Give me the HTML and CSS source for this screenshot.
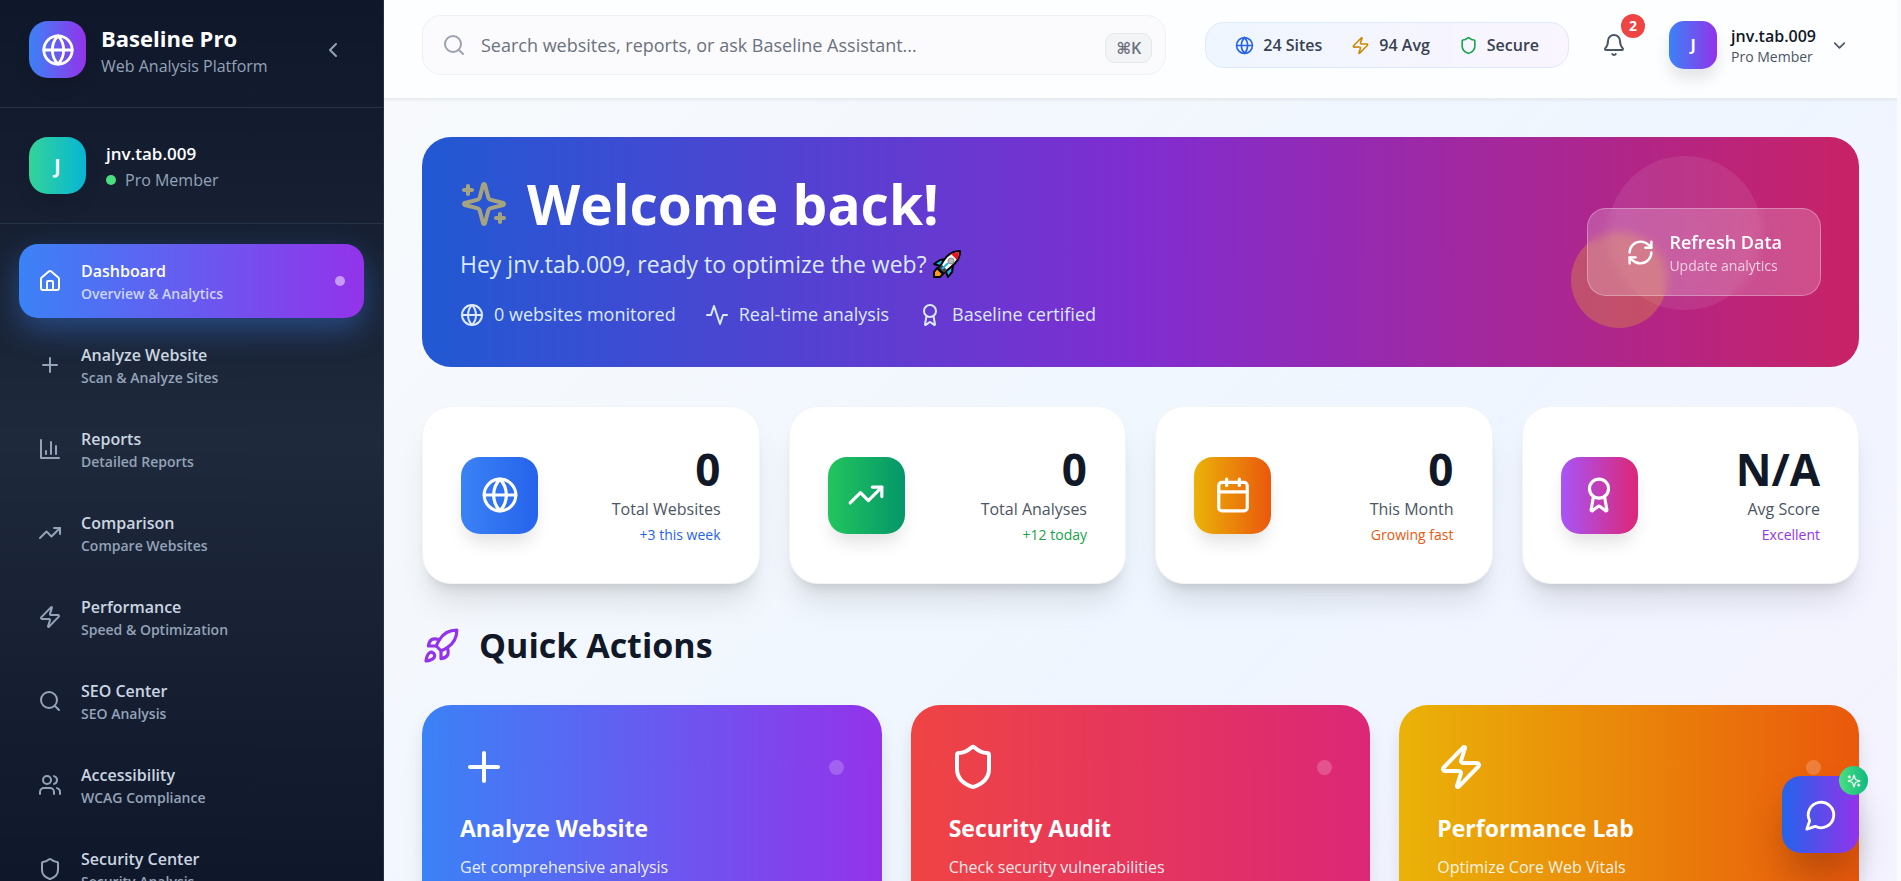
FILE: index.html
```html
<!DOCTYPE html>
<html lang="en">
<head>
<meta charset="utf-8">
<meta name="viewport" content="width=device-width, initial-scale=1">
<title>Baseline Pro</title>
<link rel="stylesheet" href="styles.css">
</head>
<body>

<!-- shared icons -->
<svg class="defs" aria-hidden="true">
  <symbol id="globe" viewBox="0 0 24 24"><circle cx="12" cy="12" r="10"/><path d="M12 2a14.5 14.5 0 0 0 0 20 14.5 14.5 0 0 0 0-20"/><path d="M2 12h20"/></symbol>
  <symbol id="house" viewBox="0 0 24 24"><path d="M15 21v-8a1 1 0 0 0-1-1h-4a1 1 0 0 0-1 1v8"/><path d="M3 10a2 2 0 0 1 .709-1.528l7-5.999a2 2 0 0 1 2.582 0l7 5.999A2 2 0 0 1 21 10v9a2 2 0 0 1-2 2H5a2 2 0 0 1-2-2z"/></symbol>
  <symbol id="plus" viewBox="0 0 24 24"><path d="M5 12h14"/><path d="M12 5v14"/></symbol>
  <symbol id="chart" viewBox="0 0 24 24"><path d="M3 3v18h18"/><path d="M18 17V9"/><path d="M13 17V5"/><path d="M8 17v-3"/></symbol>
  <symbol id="trend" viewBox="0 0 24 24"><path d="M22 7l-8.500 8.500-5-5L2 17"/><path d="M16 7h6v6"/></symbol>
  <symbol id="zap" viewBox="0 0 24 24"><path d="M4 14a1 1 0 0 1-.78-1.630l9.900-10.200a.5.5 0 0 1 .86.460l-1.920 6.020A1 1 0 0 0 13 10h7a1 1 0 0 1 .78 1.630l-9.900 10.200a.5.5 0 0 1-.86-.460l1.920-6.020A1 1 0 0 0 11 14z"/></symbol>
  <symbol id="search" viewBox="0 0 24 24"><circle cx="11" cy="11" r="8"/><path d="M21 21l-4.300-4.300"/></symbol>
  <symbol id="users" viewBox="0 0 24 24"><path d="M16 21v-2a4 4 0 0 0-4-4H6a4 4 0 0 0-4 4v2"/><circle cx="9" cy="7" r="4"/><path d="M22 21v-2a4 4 0 0 0-3-3.870"/><path d="M16 3.130a4 4 0 0 1 0 7.750"/></symbol>
  <symbol id="shield" viewBox="0 0 24 24"><path d="M20 13c0 5-3.500 7.500-7.660 8.950a1 1 0 0 1-.67-.010C7.500 20.500 4 18 4 13V6a1 1 0 0 1 1-1c2 0 4.500-1.200 6.240-2.720a1.170 1.170 0 0 1 1.520 0C14.510 3.810 17 5 19 5a1 1 0 0 1 1 1z"/></symbol>
  <symbol id="left" viewBox="0 0 24 24"><path d="M15 18l-6-6 6-6"/></symbol>
  <symbol id="down" viewBox="0 0 24 24"><path d="M6 9l6 6 6-6"/></symbol>
  <symbol id="bell" viewBox="0 0 24 24"><path d="M10.268 21a2 2 0 0 0 3.464 0"/><path d="M3.262 15.326A1 1 0 0 0 4 17h16a1 1 0 0 0 .74-1.673C19.410 13.956 18 12.499 18 8A6 6 0 0 0 6 8c0 4.499-1.411 5.956-2.738 7.326"/></symbol>
  <symbol id="sparkles" viewBox="0 0 24 24"><path d="M9.937 15.500A2 2 0 0 0 8.500 14.063l-6.135-1.582a.5.5 0 0 1 0-.962L8.500 9.936A2 2 0 0 0 9.937 8.500l1.582-6.135a.5.5 0 0 1 .963 0L14.063 8.500A2 2 0 0 0 15.500 9.937l6.135 1.581a.5.5 0 0 1 0 .964L15.500 14.063a2 2 0 0 0-1.437 1.437l-1.582 6.135a.5.5 0 0 1-.963 0z"/><path d="M20 17v4"/><path d="M22 19h-4"/><path d="M4 3v4"/><path d="M6 5H2"/></symbol>
  <symbol id="activity" viewBox="0 0 24 24"><path d="M22 12h-4l-3 9L9 3l-3 9H2"/></symbol>
  <symbol id="award" viewBox="0 0 24 24"><path d="M15.477 12.890l1.515 8.526a.5.5 0 0 1-.81.470l-3.580-2.687a1 1 0 0 0-1.197 0l-3.586 2.686a.5.5 0 0 1-.81-.469l1.514-8.526"/><circle cx="12" cy="8" r="6"/></symbol>
  <symbol id="refresh" viewBox="0 0 24 24"><path d="M3 12a9 9 0 0 1 9-9 9.750 9.750 0 0 1 6.740 2.740L21 8"/><path d="M21 3v5h-5"/><path d="M21 12a9 9 0 0 1-9 9 9.750 9.750 0 0 1-6.740-2.740L3 16"/><path d="M8 16H3v5"/></symbol>
  <symbol id="calendar" viewBox="0 0 24 24"><path d="M8 2v4"/><path d="M16 2v4"/><rect x="3" y="4" width="18" height="18" rx="2"/><path d="M3 10h18"/></symbol>
  <symbol id="rocket" viewBox="0 0 24 24"><path d="M4.500 16.500c-1.500 1.260-2 5-2 5s3.740-.5 5-2c.71-.84.7-2.130-.09-2.910a2.180 2.180 0 0 0-2.910-.09z"/><path d="M12 15l-3-3a22 22 0 0 1 2-3.950A12.880 12.880 0 0 1 22 2c0 2.720-.78 7.500-6 11a22.350 22.350 0 0 1-4 2z"/><path d="M9 12H4s.55-3.030 2-4c1.620-1.080 5 0 5 0"/><path d="M12 15v5s3.030-.55 4-2c1.080-1.620 0-5 0-5"/></symbol>
  <symbol id="message" viewBox="0 0 24 24"><path d="M7.900 20A9 9 0 1 0 4 16.100L2 22Z"/></symbol>
</svg>

<div class="app">
  <aside class="sidebar">
    <div class="brand">
      <span class="tile tile-brand"><svg class="icon i34"><use href="#globe"/></svg></span>
      <div class="brand-text">
        <h2>Baseline Pro</h2>
        <p>Web Analysis Platform</p>
      </div>
      <button class="collapse" aria-label="Collapse sidebar"><svg class="icon i24"><use href="#left"/></svg></button>
    </div>

    <div class="account">
      <span class="tile tile-user">J</span>
      <div>
        <p class="account-name">jnv.tab.009</p>
        <p class="account-plan"><span class="online"></span>Pro Member</p>
      </div>
    </div>

    <nav class="menu">
      <a href="#" class="menu-item active"><svg class="icon i24"><use href="#house"/></svg><span class="menu-text"><b>Dashboard</b><small>Overview &amp; Analytics</small></span><span class="menu-dot"></span></a>
      <a href="#" class="menu-item"><svg class="icon i24"><use href="#plus"/></svg><span class="menu-text"><b>Analyze Website</b><small>Scan &amp; Analyze Sites</small></span></a>
      <a href="#" class="menu-item"><svg class="icon i24"><use href="#chart"/></svg><span class="menu-text"><b>Reports</b><small>Detailed Reports</small></span></a>
      <a href="#" class="menu-item"><svg class="icon i24"><use href="#trend"/></svg><span class="menu-text"><b>Comparison</b><small>Compare Websites</small></span></a>
      <a href="#" class="menu-item"><svg class="icon i24"><use href="#zap"/></svg><span class="menu-text"><b>Performance</b><small>Speed &amp; Optimization</small></span></a>
      <a href="#" class="menu-item"><svg class="icon i24"><use href="#search"/></svg><span class="menu-text"><b>SEO Center</b><small>SEO Analysis</small></span></a>
      <a href="#" class="menu-item"><svg class="icon i24"><use href="#users"/></svg><span class="menu-text"><b>Accessibility</b><small>WCAG Compliance</small></span></a>
      <a href="#" class="menu-item"><svg class="icon i24"><use href="#shield"/></svg><span class="menu-text"><b>Security Center</b><small>Security Analysis</small></span></a>
    </nav>
  </aside>

  <div class="page">
    <header class="topbar">
      <label class="search">
        <svg class="icon i24"><use href="#search"/></svg>
        <input type="text" aria-label="Search" placeholder="Search websites, reports, or ask Baseline Assistant...">
        <kbd>⌘K</kbd>
      </label>
      <div class="summary">
        <span><svg class="icon i19 blue"><use href="#globe"/></svg>24 Sites</span>
        <span><svg class="icon i19 amber"><use href="#zap"/></svg>94 Avg</span>
        <span><svg class="icon i19 green"><use href="#shield"/></svg>Secure</span>
      </div>
      <button class="bell" aria-label="Notifications"><svg class="icon i24"><use href="#bell"/></svg><span class="count">2</span></button>
      <button class="profile">
        <span class="avatar">J</span>
        <span class="profile-text"><b>jnv.tab.009</b><small>Pro Member</small></span>
        <svg class="icon i19"><use href="#down"/></svg>
      </button>
    </header>

    <main class="content">
      <section class="hero">
        <span class="bubble bubble-big"></span>
        <span class="bubble bubble-small"></span>
        <div class="hero-text">
          <h1><svg class="icon i48"><use href="#sparkles"/></svg>Welcome back!</h1>
          <p class="hello">Hey jnv.tab.009, ready to optimize the web?
            <svg class="rocket" viewBox="0 0 28 28" role="img" aria-label="rocket">
              <path d="M7 10l7-1 6 6-1 7-4 5-2-5-6-6-6-2z" fill="#16b9e8" stroke="#000" stroke-width="2" stroke-linejoin="round"/>
              <path d="M4 18l6 6-3 3H1v-5z" fill="#ff9a1f" stroke="#000" stroke-width="2" stroke-linejoin="round"/>
              <path d="M27 1c-7 0-12 3-16 9l-5 8 5 5 7-6c6-5 9-9 9-16z" fill="#fff" stroke="#000" stroke-width="2" stroke-linejoin="round"/>
              <path d="M26 2c-3 0-6 1-8 2l6 6c1-2 2-5 2-8z" fill="#e81224"/>
              <path d="M6 18l5 5 3-3-5-5z" fill="#444"/>
              <path d="M9 19l6-6" stroke="#16b9e8" stroke-width="2"/>
              <circle cx="18" cy="11" r="3" fill="#bbb" stroke="#888"/>
            </svg>
          </p>
          <ul class="facts">
            <li><svg class="icon i24"><use href="#globe"/></svg>0 websites monitored</li>
            <li><svg class="icon i24"><use href="#activity"/></svg>Real-time analysis</li>
            <li><svg class="icon i24"><use href="#award"/></svg>Baseline certified</li>
          </ul>
        </div>
        <button class="refresh">
          <svg class="icon i29"><use href="#refresh"/></svg>
          <span><b>Refresh Data</b><small>Update analytics</small></span>
        </button>
      </section>

      <section class="stats">
        <div class="stat">
          <span class="stat-icon g-blue"><svg class="icon i38"><use href="#globe"/></svg></span>
          <div><strong>0</strong><p>Total Websites</p><small class="blue">+3 this week</small></div>
        </div>
        <div class="stat">
          <span class="stat-icon g-green"><svg class="icon i38"><use href="#trend"/></svg></span>
          <div><strong>0</strong><p>Total Analyses</p><small class="green">+12 today</small></div>
        </div>
        <div class="stat">
          <span class="stat-icon g-orange"><svg class="icon i38"><use href="#calendar"/></svg></span>
          <div><strong>0</strong><p>This Month</p><small class="orange">Growing fast</small></div>
        </div>
        <div class="stat">
          <span class="stat-icon g-pink"><svg class="icon i38"><use href="#award"/></svg></span>
          <div><strong>N/A</strong><p>Avg Score</p><small class="purple">Excellent</small></div>
        </div>
      </section>

      <h2 class="heading"><svg class="icon i38"><use href="#rocket"/></svg>Quick Actions</h2>
      <section class="actions">
        <a href="#" class="action g-violet">
          <span class="action-top"><svg class="icon i48"><use href="#plus"/></svg><i></i></span>
          <h3>Analyze Website</h3>
          <p>Get comprehensive analysis</p>
        </a>
        <a href="#" class="action g-red">
          <span class="action-top"><svg class="icon i48"><use href="#shield"/></svg><i></i></span>
          <h3>Security Audit</h3>
          <p>Check security vulnerabilities</p>
        </a>
        <a href="#" class="action g-orange">
          <span class="action-top"><svg class="icon i48"><use href="#zap"/></svg><i></i></span>
          <h3>Performance Lab</h3>
          <p>Optimize Core Web Vitals</p>
        </a>
      </section>
    </main>
  </div>
</div>

<button class="chat" aria-label="Open assistant">
  <svg class="icon i34"><use href="#message"/></svg>
  <span class="chat-badge"><svg class="icon i14"><use href="#sparkles"/></svg></span>
</button>

</body>
</html>
```
FILE: styles.css
```css
* {box-sizing: border-box; margin: 0; padding: 0;}
body {
  font-family: "Open Sans", "Noto Sans", sans-serif;
  font-size: 16px;
  line-height: 24px;
  color: #111827;
  overflow: hidden;
}
a {color: inherit; text-decoration: none;}
button {font: inherit; color: inherit; background: none; border: 0; cursor: pointer; text-align: left;}
ul {list-style: none;}

.defs {position: absolute; width: 0; height: 0;}
.icon {
  flex: none;
  fill: none;
  stroke: currentColor;
  stroke-width: 2;
  stroke-linecap: round;
  stroke-linejoin: round;
}
.i14 {width: 14px; height: 14px;}
.i19 {width: 19px; height: 19px;}
.i24 {width: 24px; height: 24px;}
.i29 {width: 29px; height: 29px;}
.i34 {width: 34px; height: 34px;}
.i38 {width: 38px; height: 38px;}
.i48 {width: 48px; height: 48px;}

.blue {color: #2563eb;}
.green {color: #16a34a;}
.amber {color: #ca8a04;}
.orange {color: #ea580c;}
.purple {color: #9333ea;}
.g-blue {background: linear-gradient(to right, #3b82f6, #2563eb);}
.g-green {background: linear-gradient(to right, #22c55e, #059669);}
.g-orange {background: linear-gradient(to right, #eab308, #ea580c);}
.g-pink {background: linear-gradient(to right, #a855f7, #db2777);}
.g-violet {background: linear-gradient(to right, #3b82f6, #9333ea);}
.g-red {background: linear-gradient(to right, #ef4444, #db2777);}

.app {display: flex; height: 100vh;}

/* sidebar */
.sidebar {
  width: 384px;
  flex: none;
  overflow: hidden;
  color: #fff;
  background: linear-gradient(to bottom, #0f172a, #1e293b, #0f172a);
  border-right: 1px solid #263246;
}
.brand, .account {
  display: flex;
  align-items: center;
  padding: 29px;
  border-bottom: 1px solid #263246;
}
.brand {padding-top: 21px; gap: 15px;}
.account {gap: 20px;}
.tile {
  display: flex;
  align-items: center;
  justify-content: center;
  flex: none;
  width: 57px;
  height: 57px;
  border-radius: 19px;
  font-size: 19px;
  font-weight: 700;
  box-shadow: 0 10px 15px rgba(0, 0, 0, .1);
}
.tile-brand {background: linear-gradient(to right, #3b82f6, #9333ea);}
.tile-user {background: linear-gradient(to right, #34d399, #06b6d4);}
.brand-text {flex: 1;}
.brand h2 {font-size: 22px; line-height: 32px;}
.brand p, .account-plan {color: #94a3b8;}
.collapse {display: flex; padding: 9px;}
.collapse, .menu-item {color: #94a3b8;}
.account-name {font-size: 17px; line-height: 28px; font-weight: 600;}
.account-plan {display: flex; align-items: center; gap: 9px;}
.online {width: 10px; height: 10px; border-radius: 50%; background: #4ade80;}

.menu {display: flex; flex-direction: column; gap: 10px; padding: 20px 19px;}
.menu-item {
  display: flex;
  align-items: center;
  gap: 19px;
  height: 74px;
  flex: none;
  padding: 0 19px;
  border-radius: 19px;
}
.menu-text {display: flex; flex-direction: column; flex: 1; padding-top: 2px;}
.menu-text b {font-weight: 600; color: #cbd5e1;}
.menu-text small {font-size: 14px; line-height: 22px; font-weight: 600;}
.active {
  color: #fff;
  background: linear-gradient(to right, #3b82f6, #9333ea);
  box-shadow: 0 12px 30px rgba(59, 130, 246, .4);
}
.active b {color: #fff;}
.active small {color: #ccd5fd;}
.menu-dot {width: 10px; height: 10px; border-radius: 50%; background: rgba(255, 255, 255, .5);}

/* right side */
.page {
  flex: 1;
  min-width: 0;
  overflow: hidden;
  background: linear-gradient(135deg, #f8fafc, #eff6ff 60%, #f5f3ff);
  border-right: 4px solid #f8fafc;
}
.topbar {
  display: flex;
  align-items: center;
  padding: 15px 38px 23px;
  background: #fdfeff;
  border-bottom: 1px solid #e8ebf0;
  box-shadow: 0 1px 3px rgba(0, 0, 0, .08);
}
.search {
  display: flex;
  align-items: center;
  flex: 1;
  gap: 15px;
  height: 60px;
  padding: 0 13px 0 19px;
  color: #9ca3af;
  background: #fbfbfd;
  border: 1px solid #f0f1f4;
  border-radius: 19px;
}
.search input {
  flex: 1;
  min-width: 0;
  font: inherit;
  font-size: 18px;
  color: #111827;
  background: none;
  border: 0;
  outline: 0;
}
.search input::placeholder {color: #6b7280;}
.search kbd {
  margin-top: 5px;
  padding: 2px 10px;
  font: 600 16px/24px "Open Sans", "DejaVu Sans", sans-serif;
  color: #6b7280;
  background: #f3f4f6;
  border: 1px solid #e5e7eb;
  border-radius: 10px;
}
.summary {
  display: flex;
  gap: 29px;
  margin-left: 39px;
  padding: 10px 29px;
  font-weight: 600;
  line-height: 24px;
  color: #374151;
  background: linear-gradient(to right, #eff6ff, #faf5ff);
  border: 1px solid #dbeafe;
  border-radius: 19px;
}
.summary span {display: flex; align-items: center; gap: 9px;}
.bell {position: relative; display: flex; margin-left: 19px; padding: 14px; color: #4b5563;}
.count {
  position: absolute;
  top: -5px;
  right: -5px;
  width: 24px;
  border-radius: 12px;
  font-size: 14px;
  font-weight: 700;
  text-align: center;
  color: #fff;
  background: #ef4444;
}
.profile {display: flex; align-items: center; gap: 14px; margin-left: 19px; padding: 0 10px;}
.avatar {
  width: 48px;
  border-radius: 15px;
  font-weight: 700;
  line-height: 48px;
  text-align: center;
  color: #fff;
  background: linear-gradient(to right, #3b82f6, #9333ea);
  box-shadow: 0 10px 15px rgba(0, 0, 0, .1);
}
.profile-text {display: flex; flex-direction: column; padding-top: 2px;}
.profile b {font-weight: 600; line-height: 22px;}
.profile small {font-size: 14px; line-height: 20px; color: #4b5563;}
.profile .icon {color: #4b5563;}

.content {padding: 38px;}
.hero {
  position: relative;
  display: flex;
  align-items: center;
  justify-content: space-between;
  padding: 38px;
  color: #fff;
  background: linear-gradient(to right, #2159d3, #802dd0 50%, #c82266);
  border-radius: 29px;
}
/* translucent circles behind the button */
.bubble {position: absolute; border-radius: 50%;}
.bubble-big {top: 19px; right: 97px; width: 154px; height: 154px; background: rgba(255, 255, 255, .08);}
.bubble-small {bottom: 39px; right: 192px; width: 96px; height: 96px; background: rgba(250, 204, 21, .25);}
.hero h1 {display: flex; align-items: center; gap: 19px; font-size: 55px; line-height: 58px;}
.hero h1 .icon {color: #a6a380;}
.hello {display: flex; align-items: center; gap: 6px; margin: 14px 0 19px; font-size: 23px; line-height: 34px; color: #dbeafe;}
.rocket {width: 28px; height: 28px;}
.facts {display: flex; gap: 29px; font-size: 18px; line-height: 29px; color: #dbeafe;}
.facts li {display: flex; align-items: center; gap: 10px;}
.refresh {
  position: relative;
  display: flex;
  align-items: center;
  gap: 14px;
  padding: 19px 38px;
  background: rgba(255, 255, 255, .2);
  border: 1px solid rgba(255, 255, 255, .3);
  border-radius: 19px;
  backdrop-filter: blur(5px);
}
.refresh b, .refresh small {display: block;}
.refresh b {font-size: 18px; line-height: 28px; font-weight: 600;}
.refresh small {font-size: 14px; line-height: 20px; color: #f3cfe2;}

.stats {display: grid; grid-template-columns: repeat(4, 1fr); gap: 29px; margin-top: 39px;}
.stat {
  display: flex;
  align-items: center;
  justify-content: space-between;
  padding: 36px 38px;
  text-align: right;
  background: #fff;
  border: 1px solid #f3f4f6;
  border-radius: 29px;
  box-shadow: 0 24px 30px -6px rgba(0, 0, 0, .1), 0 10px 12px -7px rgba(0, 0, 0, .12);
}
.stat-icon {
  display: flex;
  align-items: center;
  justify-content: center;
  width: 77px;
  height: 77px;
  color: #fff;
  border-radius: 19px;
  box-shadow: 0 12px 18px -4px rgba(0, 0, 0, .12);
}
.stat strong {display: block; font-size: 44px; line-height: 52px;}
.stat p {line-height: 28px; font-weight: 500; color: #4b5563;}
.stat small {display: block; font-size: 14px; line-height: 24px;}

.heading {display: flex; align-items: center; gap: 19px; margin: 40px 0 38px; font-size: 34px; line-height: 43px;}
.heading .icon {color: #9333ea;}
.actions {display: grid; grid-template-columns: repeat(3, 1fr); gap: 29px;}
.action {
  padding: 38px;
  color: #fff;
  border-radius: 29px;
  box-shadow: 0 12px 18px rgba(0, 0, 0, .1);
}
.action-top {display: flex; align-items: center; justify-content: space-between; margin-bottom: 20px;}
.action-top i {width: 15px; height: 15px; border-radius: 50%; background: rgba(255, 255, 255, .2);}
.action h3 {font-size: 23px; line-height: 34px; margin-bottom: 10px;}
.action p {color: rgba(255, 255, 255, .9);}

/* floating assistant */
.chat {
  position: fixed;
  right: 42px;
  bottom: 28px;
  display: flex;
  align-items: center;
  justify-content: center;
  width: 77px;
  height: 77px;
  color: #fff;
  background: linear-gradient(to right, #2563eb, #9333ea);
  border-radius: 19px;
  box-shadow: 0 24px 40px -6px rgba(0, 0, 0, .25);
}
.chat-badge {
  position: absolute;
  top: -10px;
  right: -9px;
  display: flex;
  align-items: center;
  justify-content: center;
  width: 29px;
  height: 29px;
  border-radius: 50%;
  background: linear-gradient(to right, #4ade80, #10b981);
}
```
